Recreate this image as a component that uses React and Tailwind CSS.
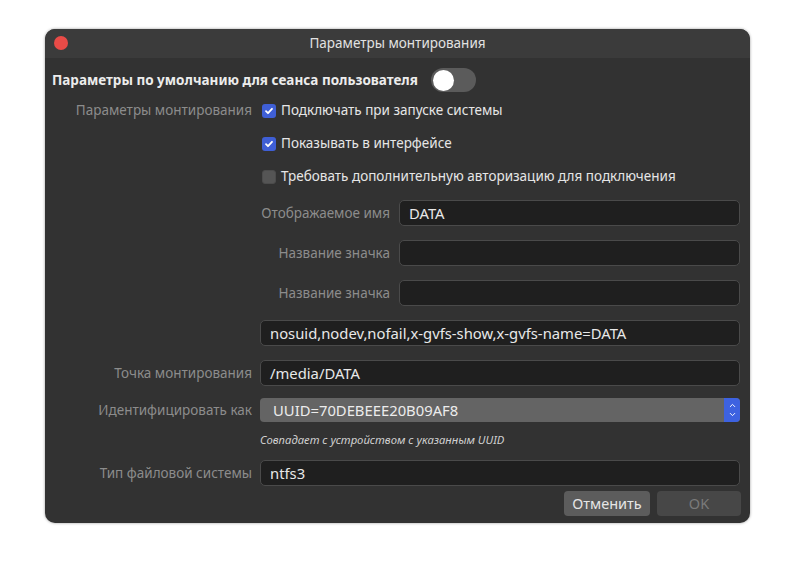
import { ChevronUp, ChevronDown } from 'lucide-react'

const font = { fontFamily: '"Noto Sans", "Open Sans", sans-serif' }

function Check({ checked }) {
  return checked ? (
    <span className="w-[14px] h-[14px] rounded-[3px] bg-[#3f5fd6] flex items-center justify-center shrink-0">
      <svg width="10" height="10" viewBox="0 0 10 10" fill="none">
        <path d="M2 5.2l2 2 4-4.4" stroke="white" strokeWidth="1.8" strokeLinecap="round" strokeLinejoin="round" />
      </svg>
    </span>
  ) : (
    <span className="w-[14px] h-[14px] rounded-[3px] bg-[#555555] border border-[#4c4c4c] shrink-0" />
  )
}

function Label({ children }) {
  return <div className="w-[200px] shrink-0 text-right text-[#8c8c8c] whitespace-nowrap">{children}</div>
}

function Field({ value }) {
  return (
    <div className="flex-1 h-[26px] rounded-[5px] bg-[#1f1f1f] border border-[#4a4a4a] flex items-center px-[9px] text-[14.8px] text-[#e8e8e8]">
      {value}
    </div>
  )
}

function CheckRow({ label, checked, text }) {
  return (
    <div className="h-[33px] flex items-center">
      <Label>{label}</Label>
      <div className="flex items-center gap-[5px] ml-[10px] text-[#e6e6e6]">
        <Check checked={checked} />
        <span>{text}</span>
      </div>
    </div>
  )
}

function InputRow({ label, value }) {
  return (
    <div className="h-[40px] flex items-center">
      <Label>{label}</Label>
      <div className="flex-1 flex items-center ml-[8px]">
        <Field value={value} />
      </div>
    </div>
  )
}

function SubRow({ label, value }) {
  return (
    <div className="h-[40px] flex items-center">
      <div className="w-[200px] shrink-0" />
      <div className="flex-1 flex items-center ml-[8px]">
        <div className="w-[130px] text-right text-[#8c8c8c] mr-[9px] whitespace-nowrap">{label}</div>
        <Field value={value} />
      </div>
    </div>
  )
}

export default function App() {
  return (
    <div className="w-[795px] h-[585px] bg-white overflow-hidden text-[13.5px]" style={font}>
      <div className="mt-[29px] ml-[45px] w-[705px] h-[494px] rounded-[10px] bg-[#323232] overflow-hidden shadow-[0_0_3px_rgba(0,0,0,0.4)] flex flex-col">
        <div className="h-[29px] bg-[#3b3b3b] relative flex items-center justify-center text-[#e2e2e2]">
          <span className="absolute left-[9px] top-[7px] w-[14px] h-[14px] rounded-full bg-[#e94b47]" />
          Параметры монтирования
        </div>

        <div className="flex flex-col pl-[7px] pr-[10px] pt-[8px]">
          <div className="h-[28px] flex items-center">
            <span className="font-bold text-[#ececec]">Параметры по умолчанию для сеанса пользователя</span>
            <span className="ml-[13px] w-[45px] h-[24px] rounded-full bg-[#5b5b5b] flex items-center px-[2px]">
              <span className="w-[21px] h-[21px] rounded-full bg-white" />
            </span>
          </div>

          <CheckRow label="Параметры монтирования" checked text="Подключать при запуске системы" />
          <CheckRow label="" checked text="Показывать в интерфейсе" />
          <CheckRow label="" checked={false} text="Требовать дополнительную авторизацию для подключения" />

          <SubRow label="Отображаемое имя" value="DATA" />
          <SubRow label="Название значка" value="" />
          <SubRow label="Название значка" value="" />
          <InputRow label="" value="nosuid,nodev,nofail,x-gvfs-show,x-gvfs-name=DATA" />
          <InputRow label="Точка монтирования" value="/media/DATA" />

          <div className="h-[34px] flex items-center">
            <Label>Идентифицировать как</Label>
            <div className="flex-1 ml-[8px] h-[24px] rounded-[4px] bg-[#646464] flex items-center overflow-hidden">
              <span className="flex-1 pl-[13px] text-[14.8px] text-[#ececec]">UUID=70DEBEEE20B09AF8</span>
              <span className="w-[16px] h-full bg-[#3d62e0] flex flex-col items-center justify-center text-white">
                <ChevronUp size={9} strokeWidth={2.5} />
                <ChevronDown size={9} strokeWidth={2.5} />
              </span>
            </div>
          </div>

          <div className="h-[26px] flex items-center">
            <div className="w-[200px] shrink-0" />
            <span className="ml-[8px] italic text-[11.3px] text-[#d0d0d0]">Совпадает с устройством с указанным UUID</span>
          </div>

          <InputRow label="Тип файловой системы" value="ntfs3" />

          <div className="mt-[-2px] h-[25px] flex justify-end gap-[7px] mr-[-1px]">
            <button className="w-[86px] h-[25px] rounded-[4px] bg-[#5c5c5c] text-[14.5px] text-[#e6e6e6]">Отменить</button>
            <button className="w-[84px] h-[25px] rounded-[4px] bg-[#474747] text-[14.5px] text-[#7a7a7a]">OK</button>
          </div>
        </div>
      </div>
    </div>
  )
}
